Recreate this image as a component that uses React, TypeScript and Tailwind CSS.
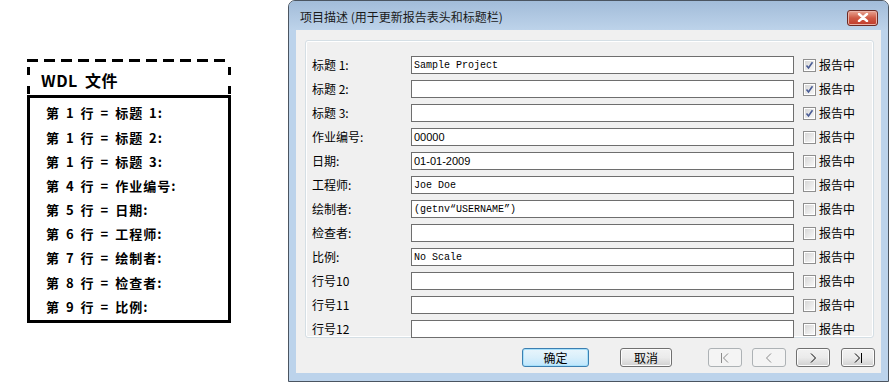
import React from "react";

type Row = { label: string; value: string; mono?: boolean; checked?: boolean };

const rows: Row[] = [
  { label: "标题 1:", value: "Sample Project", mono: true, checked: true },
  { label: "标题 2:", value: "", checked: true },
  { label: "标题 3:", value: "", checked: true },
  { label: "作业编号:", value: "00000" },
  { label: "日期:", value: "01-01-2009" },
  { label: "工程师:", value: "Joe Doe", mono: true },
  { label: "绘制者:", value: "(getnv\u201cUSERNAME\u201d)", mono: true },
  { label: "检查者:", value: "" },
  { label: "比例:", value: "No Scale", mono: true },
  { label: "行号10", value: "" },
  { label: "行号11", value: "" },
  { label: "行号12", value: "" },
];

const wdlLines = [
  "第 1 行 = 标题 1:",
  "第 1 行 = 标题 2:",
  "第 1 行 = 标题 3:",
  "第 4 行 = 作业编号:",
  "第 5 行 = 日期:",
  "第 6 行 = 工程师:",
  "第 7 行 = 绘制者:",
  "第 8 行 = 检查者:",
  "第 9 行 = 比例:",
];

const cjk = { fontFamily: '"Noto Sans CJK SC", "Liberation Sans", sans-serif' };

const CheckBox = ({ checked }: { checked?: boolean }) => (
  <div className="w-[13px] h-[13px] border border-[#8f8f8f] bg-white p-[1px] flex-shrink-0">
    <div className="w-full h-full bg-gradient-to-br from-[#d8d8d8] to-[#f7f7f7] relative">
      {checked && (
        <svg className="absolute inset-0" width="9" height="9" viewBox="0 0 9 9">
          <path d="M1.5 4.5 L3.5 7 L7.5 1.2" fill="none" stroke="#4a5d96" strokeWidth="1.6" />
        </svg>
      )}
    </div>
  </div>
);

const NavIcon = ({ kind, color }: { kind: "first" | "prev" | "next" | "last"; color: string }) => (
  <svg width="14" height="12" viewBox="0 0 14 12">
    {kind === "first" && (
      <>
        <path d="M3.5 1 V11" stroke={color} strokeWidth="1" />
        <path d="M10 1.5 L5.5 6 L10 10.5" stroke={color} fill="none" strokeWidth="1" />
      </>
    )}
    {kind === "prev" && <path d="M9 1.5 L4.5 6 L9 10.5" stroke={color} fill="none" strokeWidth="1" />}
    {kind === "next" && <path d="M5 1.5 L9.5 6 L5 10.5" stroke={color} fill="none" strokeWidth="1" />}
    {kind === "last" && (
      <>
        <path d="M4 1.5 L8.5 6 L4 10.5" stroke={color} fill="none" strokeWidth="1" />
        <path d="M10.5 1 V11" stroke={color} strokeWidth="1" />
      </>
    )}
  </svg>
);

const Button = ({
  children,
  width,
  variant = "normal",
}: {
  children: React.ReactNode;
  width: string;
  variant?: "normal" | "focus" | "disabled";
}) => {
  const styles =
    variant === "focus"
      ? "border-[#3c7fb1] bg-gradient-to-b from-[#e8f5fc] via-[#d9effb] to-[#bee6fd] shadow-[inset_0_0_0_1px_#a6e0fb]"
      : variant === "disabled"
      ? "border-[#adb2b5] bg-[#f4f4f4] text-[#838383]"
      : "border-[#707070] bg-gradient-to-b from-[#f2f2f2] via-[#ebebeb] to-[#d0d0d0] shadow-[inset_0_0_0_1px_#fcfcfc]";
  return (
    <div
      className={`${width} h-[19px] border rounded-[3px] flex items-center justify-center text-[12px] text-black ${styles}`}
      style={cjk}
    >
      {children}
    </div>
  );
};

export default function App() {
  return (
    <div className="w-[889px] h-[382px] bg-white flex overflow-hidden">
      {/* WDL file box */}
      <div className="w-[288px] flex-shrink-0 pl-[27px] pt-[59px]">
        <div className="w-[204px]">
          {/* dashed header */}
          <div className="h-[3px] bg-[repeating-linear-gradient(90deg,#000_0_11px,transparent_11px_17px)]" />
          <div className="h-[33px] flex">
            <div className="w-[3px] bg-[repeating-linear-gradient(180deg,transparent_0_5px,#000_5px_13px,transparent_13px_19px)]" />
            <div className="flex-1 flex items-center pl-[11px]">
              <span className="text-[16px] font-bold text-black leading-none pt-[2px] tracking-[0.5px] [word-spacing:3px]" style={cjk}>
                WDL 文件
              </span>
            </div>
            <div className="w-[3px] bg-[repeating-linear-gradient(180deg,transparent_0_5px,#000_5px_13px,transparent_13px_19px)]" />
          </div>
          <div className="h-[228px] border-[3px] border-black pt-[3px] pl-[16px]">
            {wdlLines.map((l) => (
              <div
                key={l}
                className="h-[24.2px] flex items-center text-[13px] font-bold text-black whitespace-pre tracking-[1px] [word-spacing:2px]"
                style={cjk}
              >
                {l}
              </div>
            ))}
          </div>
        </div>
      </div>

      {/* Dialog */}
      <div className="w-[601px] h-[382px] border border-[#4b5561] rounded-t-[7px] bg-[#bcd3eb] flex flex-col">
        <div className="h-[29px] flex-shrink-0 bg-gradient-to-b from-[#a2bcd9] to-[#bdd3ea] rounded-t-[6px] flex items-center pl-[11px] pr-[10px]">
          <span className="text-[12px] text-[#1a1a1a] flex-1 pt-[3px]" style={cjk}>
            项目描述 (用于更新报告表头和标题栏)
          </span>
          <div className="w-[31px] h-[16px] mt-[4px] rounded-[3px] border border-[#6c2a24] bg-gradient-to-b from-[#e8a493] via-[#cf5a45] to-[#c0392a] flex items-center justify-center shadow-[inset_0_0_0_1px_#eab1a6]">
            <svg width="12" height="9" viewBox="0 0 12 9">
              <path d="M2 1 L10 8 M10 1 L2 8" stroke="#ffffff" strokeWidth="2.4" strokeLinecap="round" />
            </svg>
          </div>
        </div>

        <div className="mx-[7px] h-[343px] bg-[#f0f0f0] flex flex-col pl-[9px] pr-[7px] pt-[10px]">
          <div className="h-[298px] border border-[#d5dfe5] rounded-[3px] pt-[12px] pl-[6px] shadow-[inset_0_0_0_1px_#ffffff]">
            {rows.map((r) => (
              <div key={r.label} className="h-[24px] flex items-center">
                <div className="w-[99px] text-[12px] text-black flex-shrink-0" style={cjk}>
                  {r.label}
                </div>
                <div className="w-[383px] h-[18px] border border-[#6e6e6e] bg-white flex items-center pl-[2px] flex-shrink-0">
                  <span
                    className={r.mono ? "text-[10px] text-black" : "text-[11px] text-black"}
                    style={{
                      fontFamily: r.mono
                        ? '"Liberation Mono", monospace'
                        : '"Liberation Sans", sans-serif',
                    }}
                  >
                    {r.value}
                  </span>
                </div>
                <div className="ml-[9px] flex items-center gap-[3px]">
                  <CheckBox checked={r.checked} />
                  <span className="text-[12px] text-black" style={cjk}>
                    报告中
                  </span>
                </div>
              </div>
            ))}
          </div>

          <div className="mt-[10px] flex items-center">
            <div className="ml-[217px]">
              <Button width="w-[67px]" variant="focus">
                确定
              </Button>
            </div>
            <div className="ml-[31px]">
              <Button width="w-[52px]">取消</Button>
            </div>
            <div className="ml-[36px] flex gap-[10px]">
              <Button width="w-[34px]" variant="disabled">
                <NavIcon kind="first" color="#8a8a8a" />
              </Button>
              <Button width="w-[34px]" variant="disabled">
                <NavIcon kind="prev" color="#8a8a8a" />
              </Button>
              <Button width="w-[34px]">
                <NavIcon kind="next" color="#000000" />
              </Button>
              <div className="ml-[1px]">
                <Button width="w-[34px]">
                  <NavIcon kind="last" color="#000000" />
                </Button>
              </div>
            </div>
          </div>
        </div>
      </div>
    </div>
  );
}
